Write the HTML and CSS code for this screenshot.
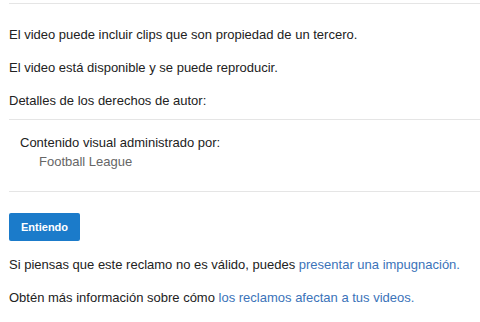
FILE: index.html
```html
<!DOCTYPE html>
<html lang="es">
<head>
  <meta charset="UTF-8">
  <title>Detalles del reclamo</title>
  <link rel="stylesheet" href="styles.css">
</head>
<body>

  <div class="reclamo">
    <p>El video puede incluir clips que son propiedad de un tercero.</p>
    <p>El video está disponible y se puede reproducir.</p>
    <p>Detalles de los derechos de autor:</p>

    <div class="derechos">
      <div class="derechos-titulo">Contenido visual administrado por:</div>
      <div class="derechos-dueno">Football League</div>
    </div>

    <div class="acciones">
      <button class="entiendo">Entiendo</button>
    </div>

    <p>Si piensas que este reclamo no es válido, puedes <a href="#">presentar una impugnación.</a></p>
    <p>Obtén más información sobre cómo <a href="#">los reclamos afectan a tus videos.</a></p>
  </div>

</body>
</html>
```

FILE: styles.css
```css
body {
  margin: 0;
  font-family: "Liberation Sans", Arial, sans-serif;
  font-size: 13px;
  color: #222;
  background-color: white;
}
.reclamo {
  margin: 3px 0 0 9px;
  padding-top: 22px;
  border-top: 1px solid #e5e5e5;
}
.reclamo p {
  margin: 0 0 16px;
  line-height: 17px;
}
.reclamo a {
  color: #3b73b9;
  text-decoration: none;
}
.derechos {
  margin-top: -6px;
  padding: 14px 0 21px 11px;
  border-top: 1px solid #e5e5e5;
  border-bottom: 1px solid #e5e5e5;
  line-height: 17px;
}
.derechos-dueno {
  margin-top: 2px;
  padding-left: 19px;
  color: #666;
}
.acciones {
  padding: 21px 0 15px;
}
.entiendo {
  height: 28px;
  padding: 0 12px;
  border: none;
  border-radius: 2px;
  background-color: #1b7bca;
  color: white;
  font-family: "Liberation Sans", Arial, sans-serif;
  font-weight: bold;
  font-size: 11px;
  cursor: pointer;
}
```
